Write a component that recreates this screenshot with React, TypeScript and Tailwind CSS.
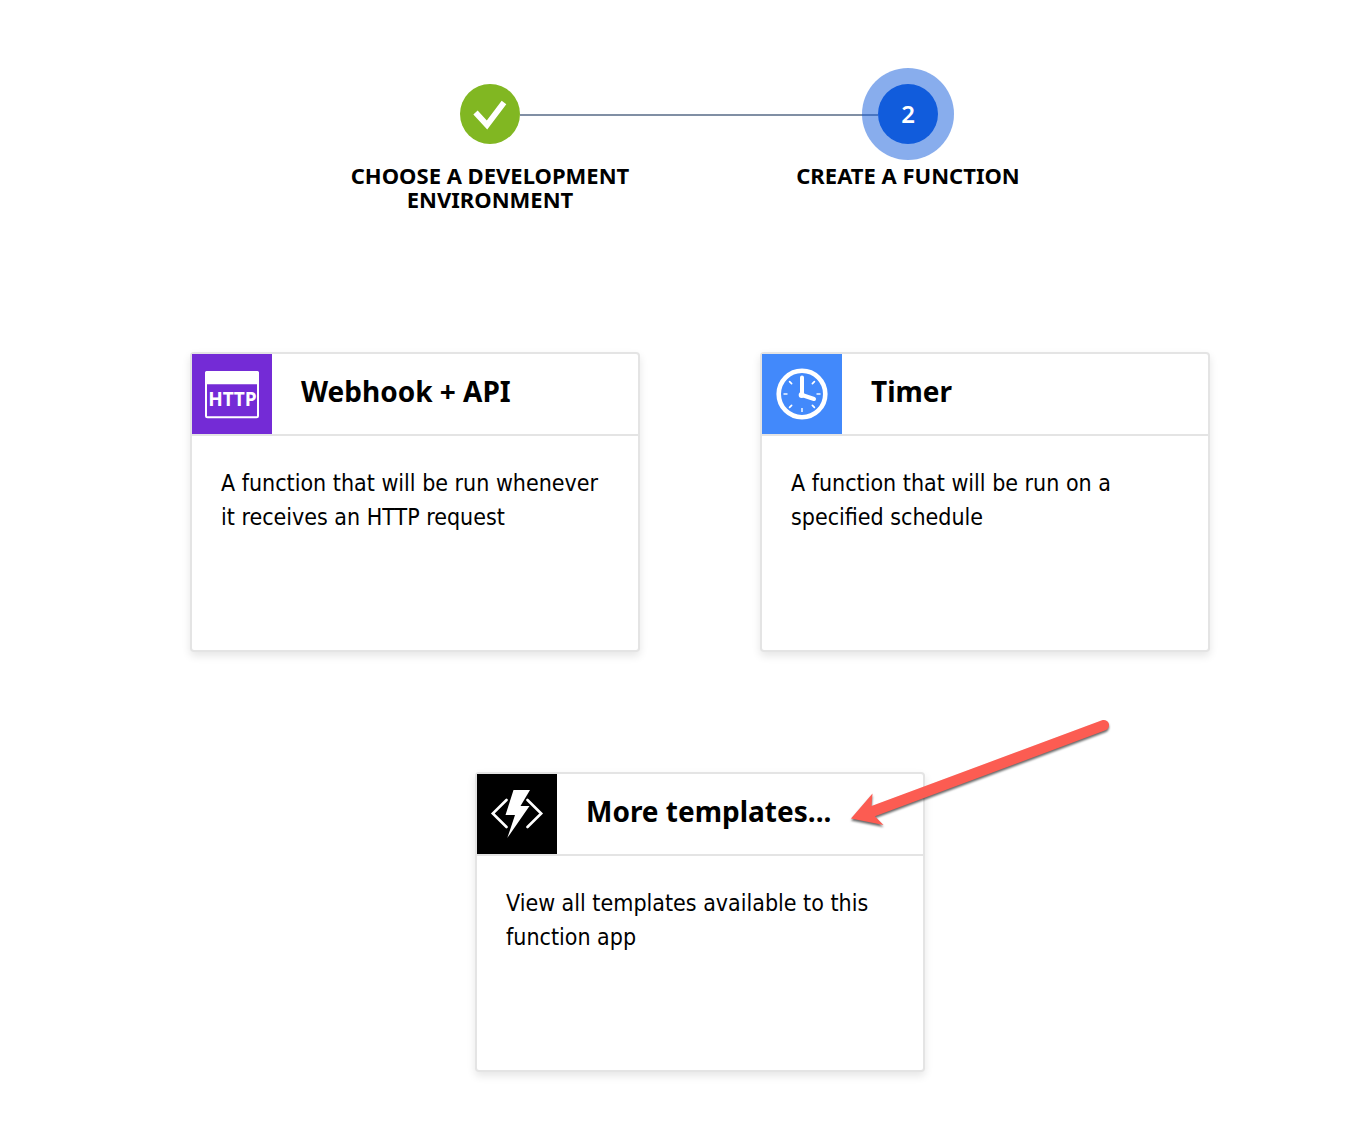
import React from "react";

function HttpIcon() {
  return (
    <svg viewBox="0 0 80 80" className="size-20 shrink-0 bg-[#742bd6]" aria-hidden="true">
      <rect x="14" y="18" width="52" height="45.3" rx="1.5" fill="none" stroke="#fff" strokeWidth="2" />
      <rect x="13" y="17" width="54" height="13.3" rx="2" fill="#fff" />
      <text
        x="40.5"
        y="52"
        textAnchor="middle"
        fill="#fff"
        fontSize="19"
        fontWeight="700"
        fontFamily="'Open Sans', 'Noto Sans', sans-serif"
      >
        HTTP
      </text>
    </svg>
  );
}

function TimerIcon() {
  return (
    <svg viewBox="0 0 80 80" className="size-20 shrink-0 bg-[#4289fb]" aria-hidden="true">
      <g fill="none" stroke="#fff" strokeLinecap="round">
        <circle cx="40" cy="40" r="23.3" strokeWidth="4.6" />
        <path d="M40 23.5V41L52 45" strokeWidth="4" strokeLinejoin="round" />
        <path d="M27.6 27.6l2 2M52.4 27.6l-2 2M27.6 53.4l2-2M52.4 53.4l-2-2" strokeWidth="1.7" />
        <path d="M21.5 40H25.5M54.5 40H58.5M40 54v4" strokeWidth="2" strokeLinecap="butt" opacity="0.7" />
      </g>
      <circle cx="39.6" cy="41" r="2.9" fill="#fff" />
    </svg>
  );
}

function FunctionsIcon() {
  return (
    <svg viewBox="0 0 80 80" className="size-20 shrink-0 bg-black" aria-hidden="true">
      <path
        d="M29.5 26L15.8 39.5L29.5 53M50.5 26L64.2 39.5L50.5 53"
        fill="none"
        stroke="#fff"
        strokeWidth="2.6"
        strokeLinecap="round"
      />
      <path d="M36.5 16H53L43.5 32H52.5L30.3 64L38 41H28.5Z" fill="#fff" />
    </svg>
  );
}

function Arrow() {
  return (
    <svg
      viewBox="0 0 290 150"
      className="pointer-events-none absolute -top-[74px] left-[363px] h-[150px] w-[290px] drop-shadow-[0_2px_1px_rgba(0,0,0,0.6)]"
      aria-hidden="true"
    >
      <path
        d="M11 118.5L32.5 93.5L31.5 106L262 20.3C265 19.3 268 21 268.8 23.5C269.6 26.3 268.3 29.2 265.5 30.3L35 116.2L43.5 125Z"
        fill="#fc5c52"
      />
    </svg>
  );
}

type CardProps = {
  title: string;
  text: string;
  icon: React.ReactNode;
  children?: React.ReactNode;
};

function TemplateCard({ title, text, icon, children }: CardProps) {
  return (
    <button
      type="button"
      className="relative flex min-h-[300px] w-full max-w-[450px] cursor-pointer flex-col rounded border-2 border-[#e4e4e4] bg-white text-left shadow-[0_4px_8px_rgba(0,0,0,0.1)]"
    >
      <span className="flex w-full items-center border-b-2 border-[#e4e4e4]">
        {icon}
        <span className="px-[29px] pb-1.5 text-[28px] leading-9 font-bold">{title}</span>
      </span>
      <span className="px-[29px] py-[30px] font-['DejaVu_Sans_Condensed','Noto_Sans',sans-serif] text-[23px] leading-[34px]">
        {text}
      </span>
      {children}
    </button>
  );
}

export default function App() {
  return (
    <div className="min-h-screen bg-white pt-[84px] pb-16 font-['Noto_Sans',sans-serif] text-black">
      <header className="flex min-h-[148px] justify-center pl-[42px]">
        <ol className="grid w-full max-w-[836px] grid-cols-2 text-center text-[22px] leading-6 font-bold">
          <li className="flex flex-col items-center gap-[19px]">
            <div className="flex w-full items-center">
              <span className="flex-1" />
              <svg viewBox="0 0 60 60" className="size-[60px] rounded-full bg-[#81b722]" role="img" aria-label="Completed">
                <path d="M15.5 28.5L27 41L44 18.5" fill="none" stroke="#fff" strokeWidth="5.8" />
              </svg>
              <span className="h-0.5 flex-1 translate-y-px bg-[#808fa4]" />
            </div>
            <span className="max-w-[300px]">CHOOSE A DEVELOPMENT ENVIRONMENT</span>
          </li>
          <li className="flex flex-col items-center gap-[19px]" aria-current="step">
            <div className="flex w-full items-center">
              <span className="h-0.5 flex-1 translate-y-px bg-[#808fa4]" />
              <span className="relative flex size-[60px] items-center justify-center rounded-full bg-[#115cdc] text-2xl font-semibold text-white shadow-[0_0_0_16px_rgba(17,92,220,0.5)]">
                2
              </span>
              <span className="flex-1" />
            </div>
            <span>CREATE A FUNCTION</span>
          </li>
        </ol>
      </header>
      <main className="flex flex-col items-center gap-[120px] pt-[120px] pl-11">
        <div className="grid w-full max-w-[1020px] grid-cols-2 gap-[120px]">
          <TemplateCard
            title="Webhook + API"
            text="A function that will be run whenever it receives an HTTP request"
            icon={<HttpIcon />}
          />
          <TemplateCard
            title="Timer"
            text="A function that will be run on a specified schedule"
            icon={<TimerIcon />}
          />
        </div>
        <TemplateCard
          title="More templates..."
          text="View all templates available to this function app"
          icon={<FunctionsIcon />}
        >
          <Arrow />
        </TemplateCard>
      </main>
    </div>
  );
}
